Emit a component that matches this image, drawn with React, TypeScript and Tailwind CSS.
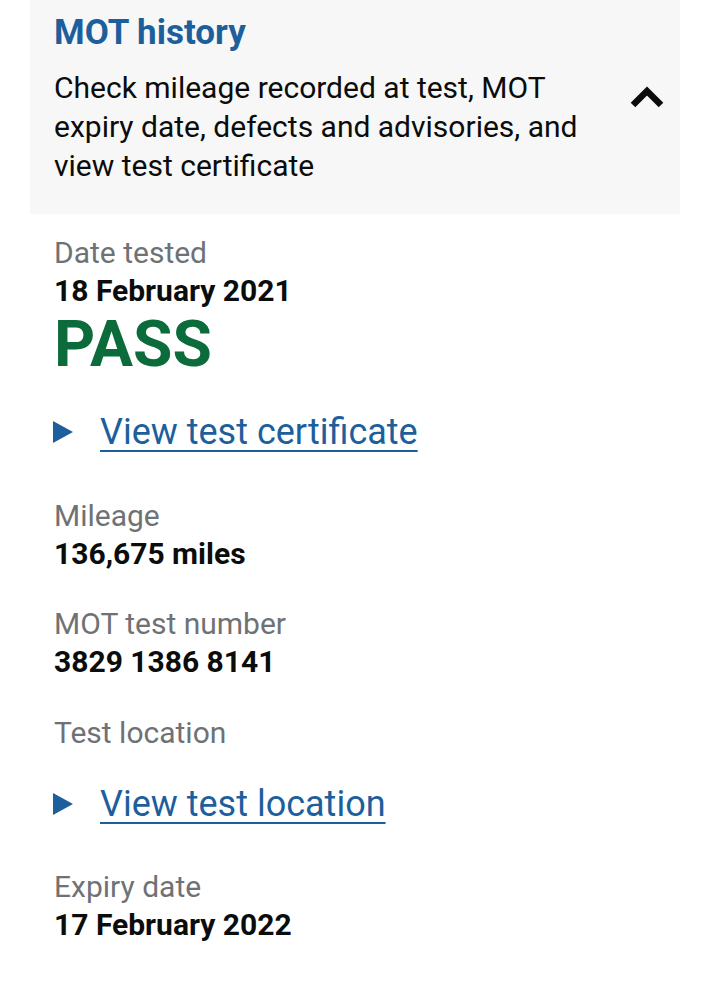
export default function App() {
  const font = { fontFamily: 'Roboto, "Liberation Sans", sans-serif' };
  const Label = ({ children }: { children: React.ReactNode }) => (
    <div className="text-[30px] leading-[36px] text-[#6f7275]">{children}</div>
  );
  const Value = ({ children }: { children: React.ReactNode }) => (
    <div className="text-[30px] leading-[40px] font-bold text-[#0b0c0c]">{children}</div>
  );
  const LinkRow = ({ children }: { children: React.ReactNode }) => (
    <div className="flex items-center">
      <svg width="20" height="22" viewBox="0 0 20 22" className="shrink-0 ml-[-1px]">
        <path d="M0 0 L20 11 L0 22 Z" fill="#1d5f9c" />
      </svg>
      <span className="ml-[27px] text-[36px] leading-[44px] text-[#1d5f9c] underline decoration-[2px] underline-offset-[6px]">
        {children}
      </span>
    </div>
  );
  return (
    <div className="w-[710px] h-[1000px] bg-white" style={font}>
      <div className="mx-[30px] bg-[#f7f7f7] pl-[24px] pr-[16px] pt-[11px] pb-[29px]">
        <div className="text-[35px] leading-[44px] font-bold text-[#1d5f9c]">MOT history</div>
        <div className="flex items-start mt-[13px]">
          <div className="flex-1 text-[30px] leading-[39px] text-[#0b0c0c]">
            Check mileage recorded at test, MOT expiry date, defects and advisories, and view test certificate
          </div>
          <svg width="34" height="24" viewBox="0 0 34 24" className="shrink-0 ml-[24px]" style={{ marginTop: 17 }}>
            <path d="M3 20 L17 6 L31 20" fill="none" stroke="#0b0c0c" strokeWidth="6.5" />
          </svg>
        </div>
      </div>
      <div className="pl-[54px] pt-[21px]">
        <Label>Date tested</Label>
        <Value>18 February 2021</Value>
        <div className="mt-[1px] text-[64px] leading-[66px] font-bold text-[#0b6b3a]">PASS</div>
        <div className="mt-[32px]">
          <LinkRow>View test certificate</LinkRow>
        </div>
        <div className="mt-[44px]">
          <Label>Mileage</Label>
          <Value>136,675 miles</Value>
        </div>
        <div className="mt-[32px]">
          <Label>MOT test number</Label>
          <Value>3829 1386 8141</Value>
        </div>
        <div className="mt-[33px]">
          <Label>Test location</Label>
        </div>
        <div className="mt-[31px]">
          <LinkRow>View test location</LinkRow>
        </div>
        <div className="mt-[43px]">
          <Label>Expiry date</Label>
          <Value>17 February 2022</Value>
        </div>
      </div>
    </div>
  );
}
